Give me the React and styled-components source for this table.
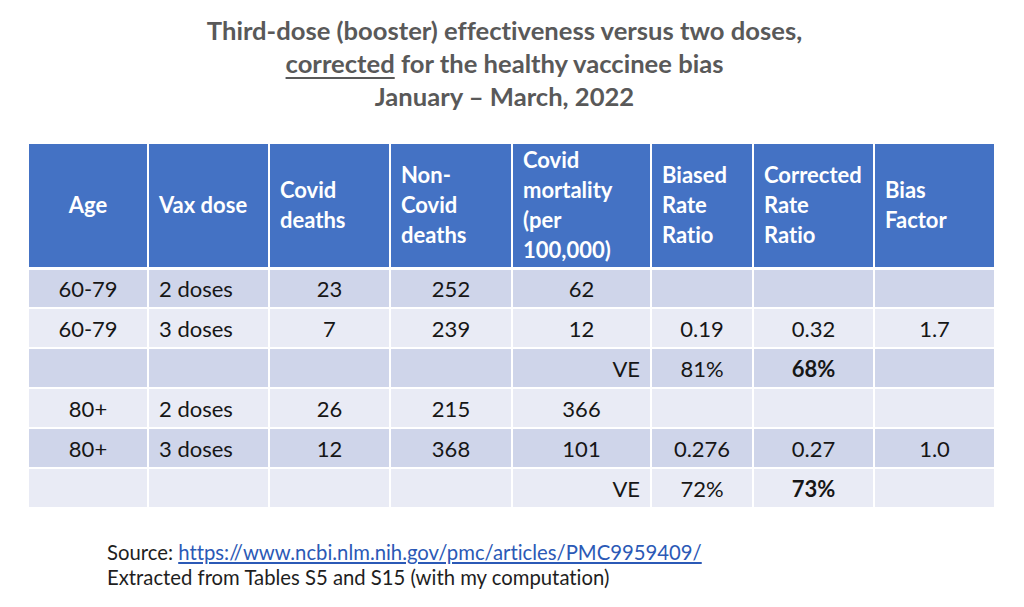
import React from 'react';
import styled, { createGlobalStyle } from 'styled-components';

const GlobalStyle = createGlobalStyle`
  html, body {
    margin: 0;
    padding: 0;
    background: #ffffff;
  }
  body {
    font-family: Lato, "Open Sans", sans-serif;
    font-variant-ligatures: none;
  }
`;

const Page = styled.div`
  width: 1024px;
  height: 607px;
  box-sizing: border-box;
  padding: 14px 30px 0 27px;
  overflow: hidden;
`;

const Title = styled.h1`
  margin: 0;
  padding-right: 12px;
  text-align: center;
  font-size: 25.6px;
  font-weight: 700;
  line-height: 33px;
  color: #595959;
  u {
    text-decoration-thickness: 2px;
    text-underline-offset: 4px;
  }
`;

const Table = styled.table`
  margin-top: 29px;
  width: 967px;
  border-collapse: collapse;
  table-layout: fixed;
  font-size: 22px;
`;

const Col = styled.col`
  width: ${(p) => p.$w}px;
`;

const HeadRow = styled.tr`
  height: 125px;
  background: #4472c4;
`;

const Th = styled.th`
  padding: 0 10px;
  border: 2px solid #ffffff;
  border-bottom-width: 3px;
  color: #ffffff;
  font-weight: 700;
  line-height: 30px;
  text-align: ${(p) => p.$align};
  vertical-align: middle;
`;

const Row = styled.tr`
  height: 40px;
  background: ${(p) => (p.$dark ? '#cfd5ea' : '#e9ebf5')};
`;

const Td = styled.td`
  padding: 0 10px;
  border: 2px solid #ffffff;
  color: #161616;
  font-weight: ${(p) => (p.$bold ? 700 : 400)};
  text-align: ${(p) => p.$align};
  white-space: nowrap;
`;

const Footer = styled.div`
  margin-top: 31px;
  padding-left: 80px;
  font-size: 20.3px;
  line-height: 25px;
  color: #1e1e1e;
`;

const Link = styled.a`
  color: #2b59b6;
  text-decoration: underline;
  text-underline-offset: 2px;
`;

const columns = [
  { label: 'Age', w: 120, align: 'center' },
  { label: 'Vax dose', w: 121, align: 'left' },
  { label: 'Covid deaths', w: 121, align: 'center' },
  { label: 'Non-Covid deaths', w: 122, align: 'center', lines: ['Non-', 'Covid deaths'] },
  { label: 'Covid mortality (per 100,000)', w: 139, align: 'center' },
  { label: 'Biased Rate Ratio', w: 102, align: 'center' },
  { label: 'Corrected Rate Ratio', w: 121, align: 'center' },
  { label: 'Bias Factor', w: 121, align: 'center' },
];

const ve = (biased, corrected) => [
  '', '', '', '',
  { text: 'VE', align: 'right' },
  biased,
  { text: corrected, bold: true },
  '',
];

const rows = [
  ['60-79', '2 doses', '23', '252', '62', '', '', ''],
  ['60-79', '3 doses', '7', '239', '12', '0.19', '0.32', '1.7'],
  ve('81%', '68%'),
  ['80+', '2 doses', '26', '215', '366', '', '', ''],
  ['80+', '3 doses', '12', '368', '101', '0.276', '0.27', '1.0'],
  ve('72%', '73%'),
];

export default function App() {
  return (
    <>
      <GlobalStyle />
      <Page>
        <Title>
          Third-dose (booster) effectiveness versus two doses,
          <br />
          <u>corrected</u> for the healthy vaccinee bias
          <br />
          January – March, 2022
        </Title>

        <Table>
          <colgroup>
            {columns.map((c) => (
              <Col key={c.label} $w={c.w} />
            ))}
          </colgroup>
          <thead>
            <HeadRow>
              {columns.map((c, i) => (
                <Th key={c.label} $align={i === 0 ? 'center' : 'left'}>
                  {c.lines ? (
                    <>
                      {c.lines[0]}
                      <br />
                      {c.lines[1]}
                    </>
                  ) : (
                    c.label
                  )}
                </Th>
              ))}
            </HeadRow>
          </thead>
          <tbody>
            {rows.map((r, ri) => (
              <Row key={ri} $dark={ri % 2 === 0}>
                {r.map((cell, ci) => {
                  const c = typeof cell === 'string' ? { text: cell } : cell;
                  return (
                    <Td
                      key={ci}
                      $align={c.align || columns[ci].align}
                      $bold={c.bold}
                    >
                      {c.text}
                    </Td>
                  );
                })}
              </Row>
            ))}
          </tbody>
        </Table>

        <Footer>
          Source:{' '}
          <Link href="#">https://www.ncbi.nlm.nih.gov/pmc/articles/PMC9959409/</Link>
          <br />
          Extracted from Tables S5 and S15 (with my computation)
        </Footer>
      </Page>
    </>
  );
}
